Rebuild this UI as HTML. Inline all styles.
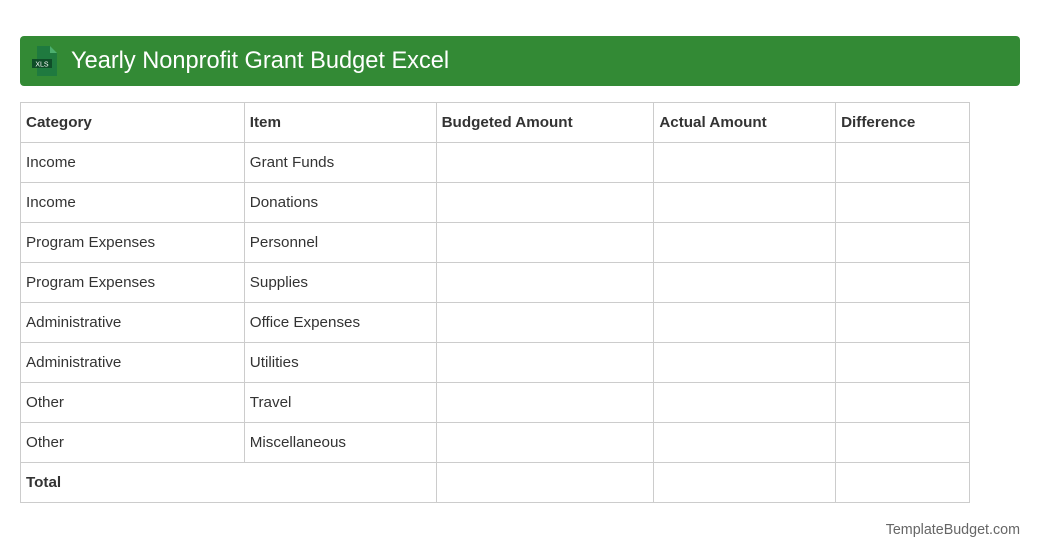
<!DOCTYPE html><html><head><style>
body{margin:0;width:1040px;height:560px;background:#fff;font-family:"Liberation Sans",Arial,sans-serif;position:relative}
.h{position:absolute;left:20px;top:36px;width:1000px;height:50px;background:#338a35;border-radius:4px}
.h span{position:absolute;left:51px;top:12px;color:#fff;font-size:23.6px}
table{position:absolute;left:20px;top:102px;border-collapse:collapse;width:950px}
td{border:1px solid #ccc;height:39px;padding:0 0 0 5px;font-size:15.2px;color:#333}
.b td{font-weight:bold}
.f{position:absolute;right:20px;top:522px;font-size:14.3px;color:#666}
</style></head><body>
<div class="h"><svg style="position:absolute;left:12px;top:10px" width="28" height="30" viewBox="0 0 28 30"><path d="M5 0h13l7 7v23H5z" fill="#1f7a3f"/><path d="M18 0l7 7h-7z" fill="#4caf6e"/><rect x="0" y="13" width="20" height="9" fill="#0f4d28"/><text x="10" y="20.5" font-size="7" fill="#fff" text-anchor="middle" font-family="Liberation Sans">XLS</text></svg><span>Yearly Nonprofit Grant Budget Excel</span></div>
<table>
<colgroup><col style="width:224px"><col style="width:192px"><col style="width:218px"><col style="width:182px"><col style="width:134px"></colgroup>
<tr class="b"><td>Category</td><td>Item</td><td>Budgeted Amount</td><td>Actual Amount</td><td>Difference</td></tr>
<tr><td>Income</td><td>Grant Funds</td><td></td><td></td><td></td></tr>
<tr><td>Income</td><td>Donations</td><td></td><td></td><td></td></tr>
<tr><td>Program Expenses</td><td>Personnel</td><td></td><td></td><td></td></tr>
<tr><td>Program Expenses</td><td>Supplies</td><td></td><td></td><td></td></tr>
<tr><td>Administrative</td><td>Office Expenses</td><td></td><td></td><td></td></tr>
<tr><td>Administrative</td><td>Utilities</td><td></td><td></td><td></td></tr>
<tr><td>Other</td><td>Travel</td><td></td><td></td><td></td></tr>
<tr><td>Other</td><td>Miscellaneous</td><td></td><td></td><td></td></tr>
<tr class="b"><td colspan="2">Total</td><td></td><td></td><td></td></tr>
</table>
<div class="f">TemplateBudget.com</div>
</body></html>
